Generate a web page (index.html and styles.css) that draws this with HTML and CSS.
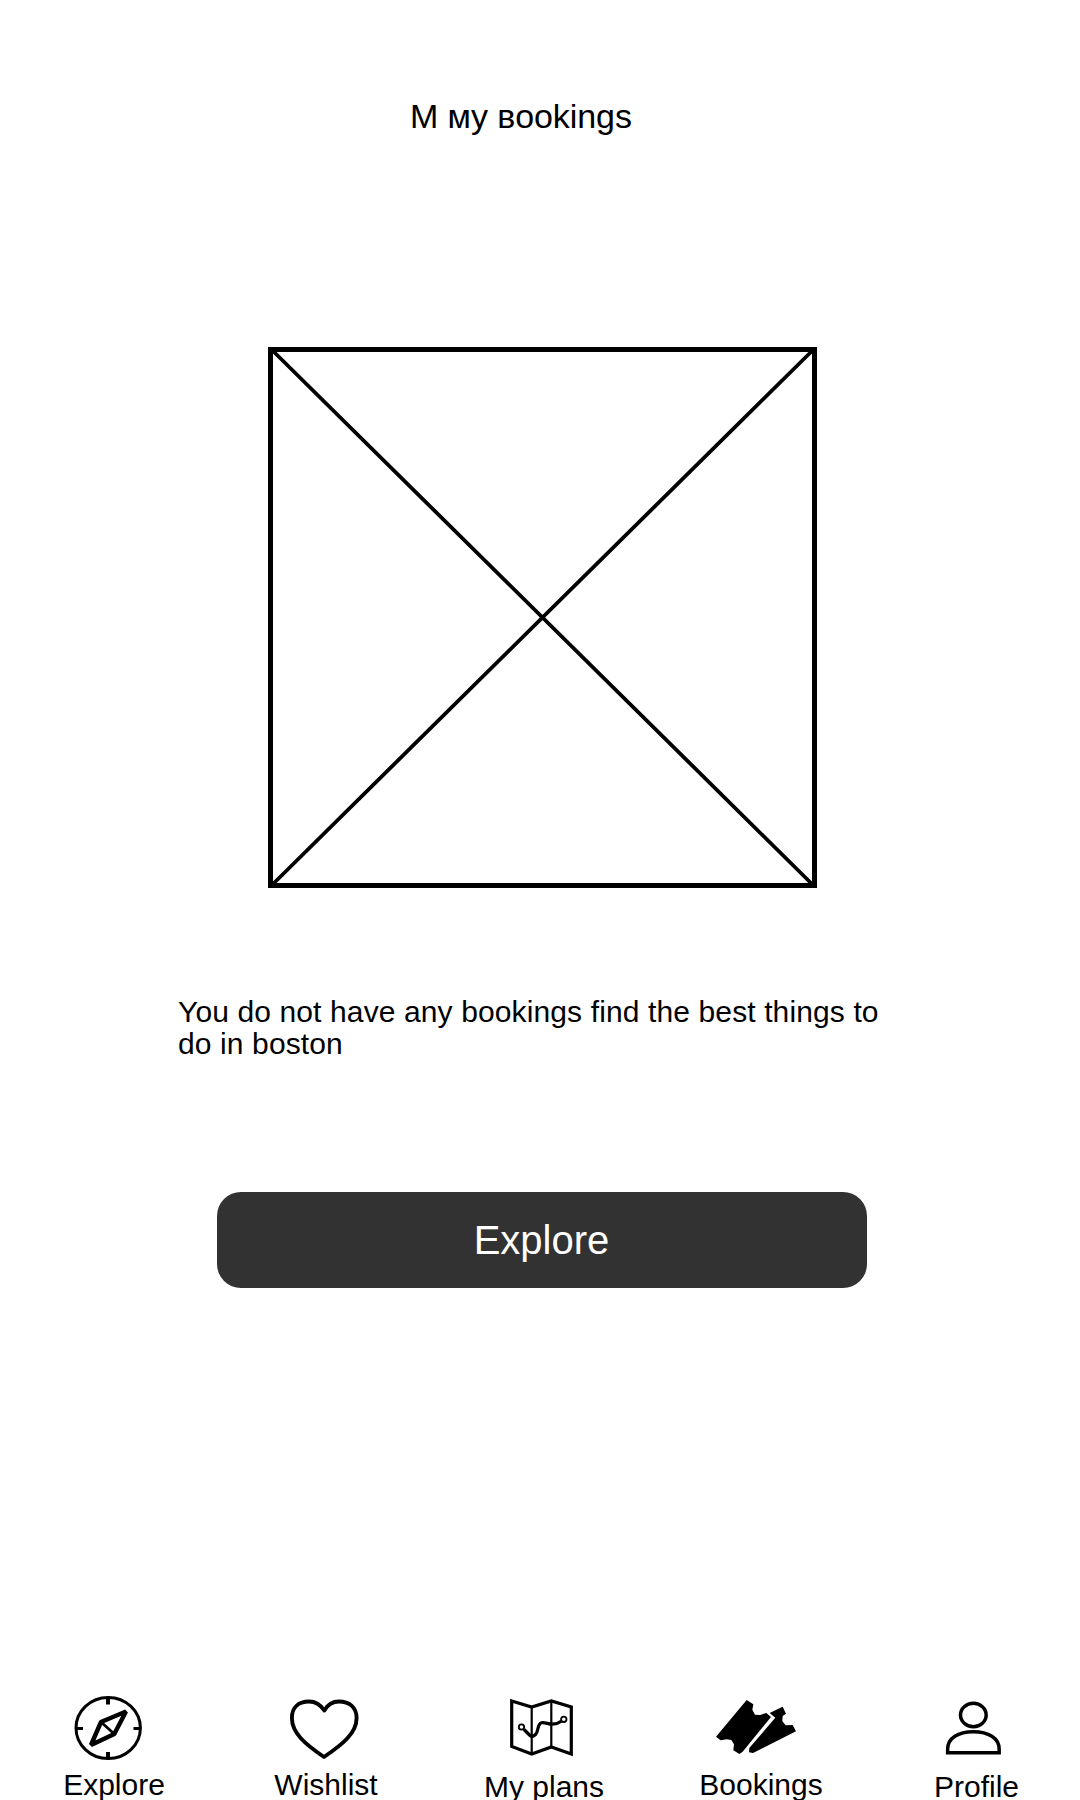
FILE: index.html
```html
<!DOCTYPE html>
<html lang="en">
<head>
<meta charset="utf-8">
<title>My Bookings</title>
<link rel="stylesheet" href="styles.css">
</head>
<body>
<main class="screen">
  <h1 class="title">M мy вookings</h1>
  <svg class="placeholder" viewBox="0 0 550 542" fill="none" stroke="#000">
    <path d="M3 3 546 540M546 3 3 540" stroke-width="3.8"/>
    <rect x="2.5" y="3.500" width="544" height="536" stroke-width="5"/>
  </svg>
  <p class="message">You do not have any bookings find the best things to do in boston</p>
  <button class="cta">Explore</button>
  <nav class="tabs">
    <a class="tab tab-explore">
      <svg class="icon" viewBox="0 0 90 80" fill="none" stroke="#000">
        <ellipse cx="45.2" cy="38" rx="32.2" ry="30.6" stroke-width="3"/>
        <path d="M45 8v6.5M45 62v7" stroke-width="4"/>
        <path d="M13 38.5h7M70.5 38.5h7" stroke-width="3"/>
        <path d="M63 21.5 38 32 28 55 51.3 44Z" stroke-width="4.4" stroke-linejoin="bevel"/>
        <path d="M38 32 51.3 44" stroke-width="2.8"/>
      </svg>
      <span>Explore</span>
    </a>
    <a class="tab tab-wishlist">
      <svg class="icon" viewBox="0 0 90 80" fill="none" stroke="#000" stroke-width="3.9">
        <path d="M45.3 20.500C41 14 36 11.500 30 11.500C20 11.500 12.900 17 12.900 28C12.900 43 26 54 45 67C64 54 77.600 43 77.600 28C77.600 17 70 11.500 60 11.500C54 11.500 49 14 45.300 20.500Z" stroke-linejoin="round"/>
      </svg>
      <span>Wishlist</span>
    </a>
    <a class="tab tab-plans">
      <svg class="icon" viewBox="0 0 90 80" fill="none" stroke="#000">
        <path d="M16.700 11 36.700 17 56.300 11 76.300 17V64L56.300 57 36.700 64 16.700 56.500Z" stroke-width="3.200"/>
        <path d="M36.700 17v47M56.300 11v46" stroke-width="2.200"/>
        <circle cx="26.500" cy="37" r="2.700" stroke-width="1.800"/>
        <circle cx="68.800" cy="29.300" r="2.700" stroke-width="1.800"/>
        <path d="M29 39.500 35 45.500Q37.500 47.500 40.500 44.500C44 41 42 34 46.500 32.700C50 32 54 34.500 57.500 34.200C61 34 64 33 66.700 31" stroke-width="3.200"/>
      </svg>
      <span>My plans</span>
    </a>
    <a class="tab tab-bookings">
      <svg class="icon" viewBox="63 30 270 240">
        <path d="M170 60 190 73 187 89 195 104 210 105 229 99 243 111 158 215 148 222 130 211 132 193 124 180 110 178 92 181 78 170Z"/>
        <path d="M239 99 278 80 288 101 278 108 277 124 287 136 308 135 318 154 189 219 177 217 178 204 256 113Z"/>
      </svg>
      <span>Bookings</span>
    </a>
    <a class="tab tab-profile">
      <svg class="icon" viewBox="51 30 270 240" fill="none" stroke="#000" stroke-width="10.500">
        <ellipse cx="190" cy="105" rx="38.500" ry="35"/>
        <path d="M113 218.500V207C113 174 145 155 190 155C235 155 267.500 174 267.500 207V218.500Z"/>
      </svg>
      <span>Profile</span>
    </a>
  </nav>
</main>
</body>
</html>
```
FILE: styles.css
```css
* { box-sizing: border-box; }

body {
  margin: 0;
  background: #fff;
  color: #000;
  font-family: "Liberation Sans", Arial, sans-serif;
}

.screen {
  display: flex;
  flex-direction: column;
  height: 1800px;
  overflow: hidden;
}

.title {
  margin: 96px 0 0 410px;
  font-size: 34px;
  line-height: 40px;
  font-weight: 400;
  letter-spacing: -0.08px;
}

.placeholder {
  flex: none;
  width: 550px;
  height: 542px;
  margin: 210px 0 0 268px;
}

.message {
  width: 730px;
  margin: 108px 0 0 178px;
  font-size: 30px;
  line-height: 32px;
  letter-spacing: 0.12px;
  font-variant-ligatures: common-ligatures;
}

.cta {
  flex: none;
  width: 650px;
  height: 96px;
  margin: 132px 0 0 217px;
  padding: 0 1px 0 0;
  border: 0;
  border-radius: 24px;
  background: #323232;
  color: #fff;
  font: 40px "Liberation Sans", Arial, sans-serif;
}

.tabs {
  display: grid;
  grid-template-columns: repeat(5, 1fr);
  margin-top: 402px;
}

.tab {
  display: flex;
  flex-direction: column;
  align-items: center;
  font-size: 30px;
  line-height: 34px;
}

.icon {
  width: 90px;
  height: 80px;
}

.tab span { margin-top: -2px; }
.tab-explore span { margin-left: 12px; }
.tab-wishlist span { margin-left: 4px; }
.tab-plans span { margin: 0 0 0 8px; }
.tab-bookings span { margin-left: 10px; }
.tab-profile span { margin: 0 0 0 9px; }
```
